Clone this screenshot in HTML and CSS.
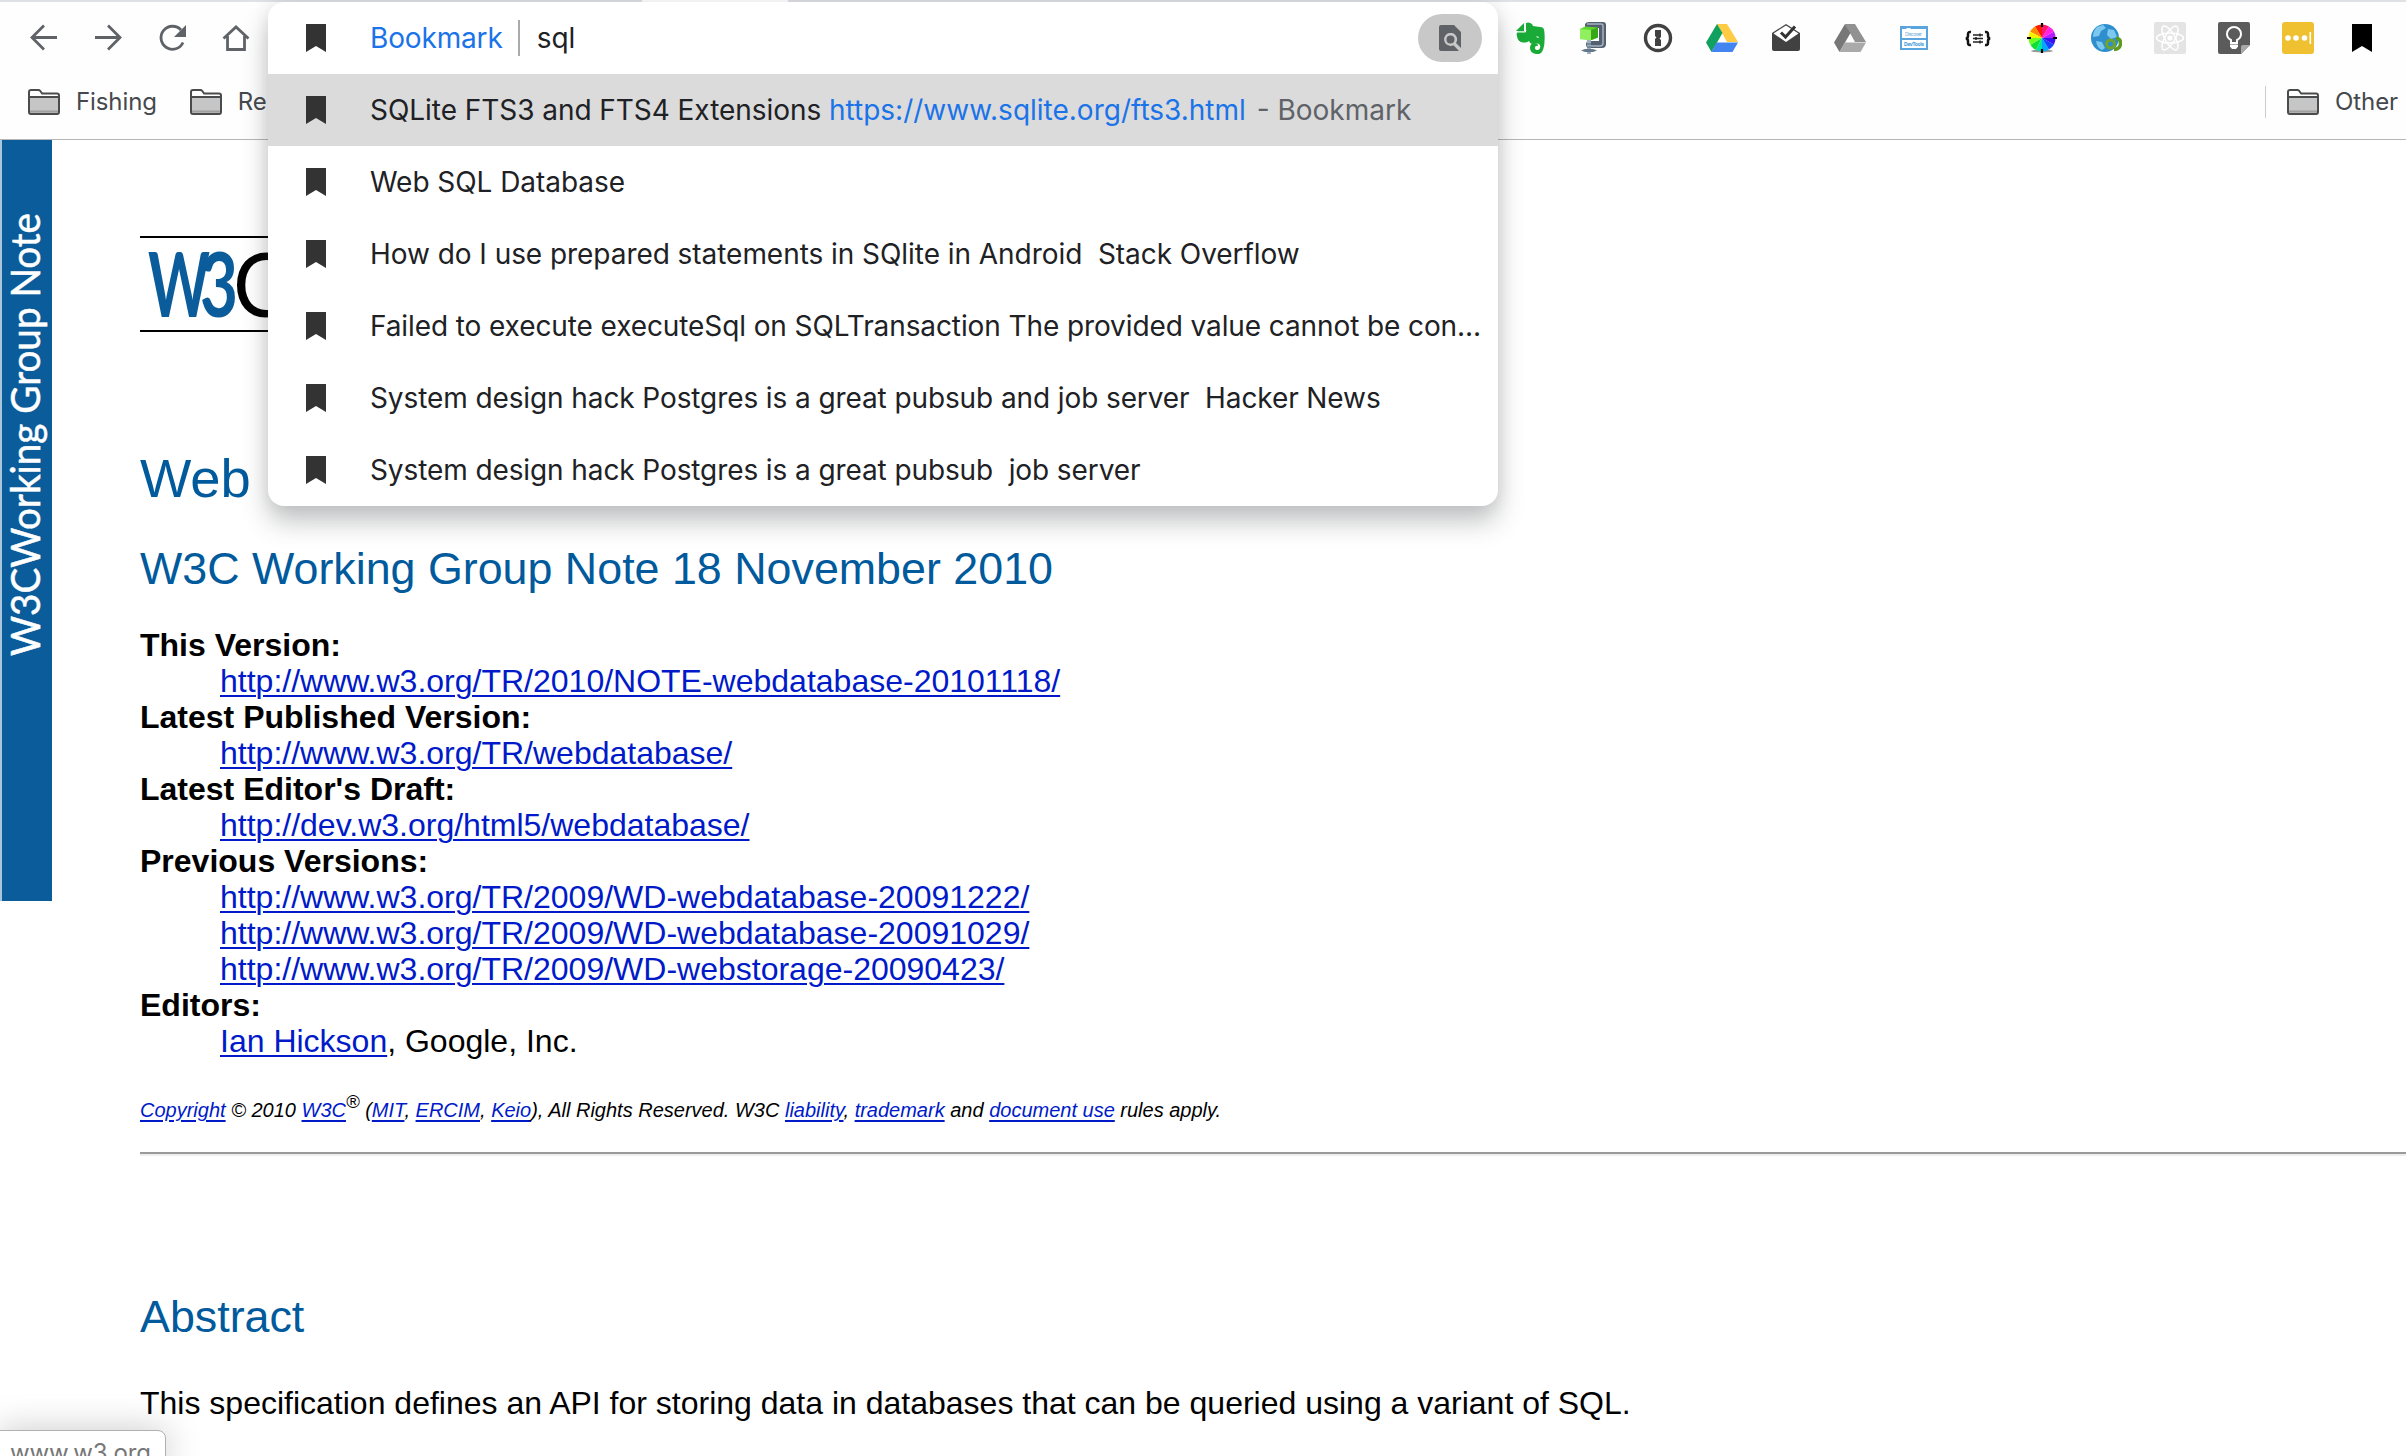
FILE: index.html
```html
<!DOCTYPE html>
<html lang="en">
<head>
<meta charset="utf-8">
<title>Web SQL Database</title>
<link rel="stylesheet" href="styles.css">
</head>
<body>
<svg class="defs" width="0" height="0">
  <defs>
    <symbol id="mark" viewBox="0 0 20 28"><path d="M0 0h20v28l-10-6-10 6z"/></symbol>
    <symbol id="folder" viewBox="0 0 32 26"><path d="M1 8V3q0-2 2-2h7.500q1 0 1.800 1l1.800 2.500H29q2 0 2 2V8" fill="#fff" stroke="#4a4b4d" stroke-width="2"/><path d="M1 8h30v15q0 2-2 2H3q-2 0-2-2z" fill="#c6c6c6" stroke="#4a4b4d" stroke-width="2"/><path d="M2 22.500h28" stroke="#9f9f9f" stroke-width="2"/></symbol>
  </defs>
</svg>
<div class="browser">
  <header class="chrome">
    <div class="tab-edge"><span class="tab-active"></span></div>
    <div class="toolbar">
      <nav class="nav">
        <svg viewBox="0 0 32 32"><path d="M29 15.500H4.500M16 3.500l-12 12 12 12"/></svg>
        <svg viewBox="0 0 32 32"><path d="M3 15.500h24.500M16 3.500l12 12-12 12"/></svg>
        <svg viewBox="0 0 32 32"><path d="M27 20.500A11.500 11.500 0 1 1 25 8"/><path class="solid" d="M30 3v12H18z"/></svg>
        <svg viewBox="0 0 32 32"><path d="M3.500 16.500L16 5l12.500 11.500M7.500 14v13.500h17V14"/></svg>
      </nav>
      <div class="extensions">
        <svg viewBox="0 0 32 32"><path fill="#1aaa38" d="M12 1Q15-.5 18 2l1 2 7 1q4 0 4.300 4 1.200 12-1.300 19-2 5-7 4-6-1-6-6 0-5 5-5 3 0 3 3-3-1-3 2 0 2 3 2 3-1 2-5-2-3-7-1-3 0-4-3-2 2-6 1.500-5-.5-6-6-1-4 1-5h7q2 0 1-2z"/><path d="M10 1v8H2z" fill="#1aaa38"/><path d="M11.500 1v9H2.500" fill="none" stroke="#fff" stroke-width="1"/><path d="M22 15q2-2 3 1z" fill="#fff"/></svg>
        <svg viewBox="2 0 32 32"><path d="M9 2q1-2 4-2h14q3 0 3 3v19q0 4-4 4H13q-3 0-3-4l1-3h12V6H9z" fill="#52606f"/><path d="M11 2h14q2 0 2 2v17q0 3-3 3H12" fill="none" stroke="#a7b4c2" stroke-width="1.500"/><path d="M4 7l5-2.500 13 1v10l-6 2.500-12-1z" fill="#5fd62b"/><path d="M4 7l11 1v10L4 17z" fill="#91f05e"/><path d="M15 8l7-2.500v10L15 18z" fill="#38a817"/><path d="M11 18h4v14h-4z" fill="#9fb0c0"/><path d="M5 28.500l4-1.500h8l4 1.500-4 1.500H9z" fill="#65798c"/><path d="M11 22h4m-4 3h4" stroke="#4c6074"/></svg>
        <svg viewBox="0 0 32 32"><circle cx="16" cy="16" r="12.500" fill="#fff" stroke="#414141" stroke-width="3.400"/><path d="M13 8h6v7l-1.500 1.500L19 18v6h-6v-7l1.500-1.500L13 14z" fill="#414141"/></svg>
        <svg viewBox="0 0 32 32"><path d="M11 2h10l11 18H21z" fill="#ffcb45"/><path d="M11 2l5.500 9L5.500 30 0 20.500z" fill="#0fa15d"/><path d="M10.500 20.500H32L26.500 30h-21z" fill="#4285f0"/></svg>
        <svg viewBox="0 0 32 32"><path d="M2 11L16 2l14 9v16q0 2-2 2H4q-2 0-2-2z" fill="#414141"/><path d="M3.500 11.500L16 3.500l12.500 8L16 20z" fill="#fff"/><path d="M11 10.500l4.500 4.500L25 4.500" fill="none" stroke="#333" stroke-width="3"/></svg>
        <svg viewBox="0 0 32 32"><path d="M11 2h10l11 18H21z" fill="#919191"/><path d="M11 2l5.500 9L5.500 30 0 20.500z" fill="#777"/><path d="M10.500 20.500H32L26.500 30h-21z" fill="#aaa"/></svg>
        <svg viewBox="0 0 32 32"><path d="M2 4h28v24H2z" fill="#5aa5de"/><path d="M4 7h4l1-1h3l1 1h15v9H4zM4 18h24v8H4z" fill="#fff"/><text x="7" y="14" font-size="5" textLength="17" fill="#69a9d8">Discover</text><text x="6" y="23.500" font-size="5" font-weight="700" textLength="20" fill="#4197d8">DevTools</text></svg>
        <svg viewBox="0 0 32 32"><path d="M9 10Q6 9.500 6 12v2q0 2-2 2.500 2 .5 2 2.500v2q0 2.500 3 2M23 10q3-.5 3 2v2q0 2 2 2.500-2 .5-2 2.500v2q0 2.500-3 2" fill="none" stroke="#111" stroke-width="2.500"/><path d="M11 13h10M11 16.500h10M11 20h10M18 11.500v3M14 15v3M18 18.500v3" stroke="#222" stroke-width="1.500"/></svg>
        <svg viewBox="0 0 32 32"><ellipse cx="16" cy="29" rx="11" ry="1.500" fill="#999"/><path fill="#ff1c00" d="M16 16V2.500a13.500 13.500 0 0 0-7 2z"/><path fill="#ff8a00" d="M16 16L9 4.500a13.500 13.500 0 0 0-5 5z"/><path fill="#f6f000" d="M16 16L4 9.500A13.500 13.500 0 0 0 2.500 16z"/><path fill="#6fff20" d="M16 16H2.500a13.500 13.500 0 0 0 2 7z"/><path fill="#10df30" d="M16 16L4.500 23A13.500 13.500 0 0 0 10 28z"/><path fill="#00e6a0" d="M16 16l-6 12a13.500 13.500 0 0 0 6 1.500z"/><path fill="#00a8ff" d="M16 16v13.500a13.500 13.500 0 0 0 7-2z"/><path fill="#1344ff" d="M16 16l7 11.500a13.500 13.500 0 0 0 5-5z"/><path fill="#3a10f0" d="M16 16l12 6.500a13.500 13.500 0 0 0 1.500-6.500z"/><path fill="#b51cff" d="M16 16h13.500A13.500 13.500 0 0 0 28 9.500z"/><path fill="#ff20e8" d="M16 16l12-6.500a13.500 13.500 0 0 0-5-5z"/><path fill="#ff1670" d="M16 16l7-11.500a13.500 13.500 0 0 0-7-2z"/><path d="M16 1v4m0 22v4M1 16h4m22 0h4" stroke="#000" stroke-width="2.200"/></svg>
        <svg viewBox="0 0 32 32"><circle cx="15" cy="16" r="14" fill="#2f8fce"/><path d="M7 5l6-2 3 3-5 3-2 5-6 1q0-6 4-10zM18 7l6 1 3 7-6 2-4-4zM6 19l6 1 3 6-3 2q-5-2-6-9z" fill="#7cc8ee"/><path d="M26 16.500q4.500 0 4.500 4.500 0 6-6.500 6.500" fill="none" stroke="#5e9a20" stroke-width="3.500"/><circle cx="20.500" cy="22" r="4" fill="none" stroke="#6fa52a" stroke-width="3"/></svg>
        <svg viewBox="0 0 32 32"><rect width="32" height="32" rx="2" fill="#e4e4e4"/><g fill="none" stroke="#fff" stroke-width="1.500"><ellipse cx="16" cy="16" rx="13.500" ry="5"/><ellipse cx="16" cy="16" rx="13.500" ry="5" transform="rotate(60 16 16)"/><ellipse cx="16" cy="16" rx="13.500" ry="5" transform="rotate(120 16 16)"/></g><circle cx="16" cy="16" r="2.600" fill="#fff"/></svg>
        <svg viewBox="0 0 32 32"><path d="M2 0h28q2 0 2 2v21l-9 9H2q-2 0-2-2V2q0-2 2-2z" fill="#5b5b5b"/><path d="M23 32v-7q0-2 2-2h7z" fill="#a9a9a9"/><path d="M13 21v-3q-4-2-4-6a7 7 0 0 1 14 0q0 4-4 6v3z" fill="none" stroke="#fff" stroke-width="2"/><path d="M12 22.500h8v2l-2 2.500h-4l-2-2.500z" fill="#fff"/></svg>
        <svg viewBox="0 0 32 32"><rect width="32" height="32" rx="3" fill="#efc02f"/><g fill="#fff"><circle cx="6" cy="16" r="2.800"/><circle cx="14" cy="16" r="2.800"/><circle cx="22.500" cy="16" r="2.800"/><path d="M27.500 10h1.600v12h-1.600z"/></g></svg>
        <svg viewBox="0 0 32 32"><path d="M6 2h20v28l-10-6-10 6z" fill="#000"/></svg>
      </div>
    </div>
    <div class="bookmarks">
      <div class="bookmark"><svg class="folder"><use href="#folder"/></svg><span>Fishing</span></div>
      <div class="bookmark"><svg class="folder"><use href="#folder"/></svg><span>Re</span></div>
      <div class="bookmark other"><svg class="folder"><use href="#folder"/></svg><span>Other</span></div>
    </div>
  </header>

  <main class="page">
    <aside class="ribbon">
      <svg width="52" height="761"><text transform="translate(40 516) rotate(-90)" textLength="443" lengthAdjust="spacingAndGlyphs">W3CWorking Group Note</text></svg>
    </aside>
    <article class="doc">
      <div class="logo">
        <svg width="200" height="92"><text class="w3" x="8" y="79" textLength="62" lengthAdjust="spacingAndGlyphs">W</text><text class="w3" x="60" y="79" textLength="38" lengthAdjust="spacingAndGlyphs">3</text><text class="c" x="93" y="79" textLength="56" lengthAdjust="spacingAndGlyphs">C</text></svg>
      </div>
      <h1>Web</h1>
      <h2 class="date"><span>W3C Working Group Note 18 November 2010</span></h2>
      <dl>
        <dt>This Version:</dt>
        <dd><a>http://www.w3.org/TR/2010/NOTE-webdatabase-20101118/</a></dd>
        <dt>Latest Published Version:</dt>
        <dd><a>http://www.w3.org/TR/webdatabase/</a></dd>
        <dt>Latest Editor's Draft:</dt>
        <dd><a>http://dev.w3.org/html5/webdatabase/</a></dd>
        <dt>Previous Versions:</dt>
        <dd><a>http://www.w3.org/TR/2009/WD-webdatabase-20091222/</a></dd>
        <dd><a>http://www.w3.org/TR/2009/WD-webdatabase-20091029/</a></dd>
        <dd><a>http://www.w3.org/TR/2009/WD-webstorage-20090423/</a></dd>
        <dt>Editors:</dt>
        <dd><a>Ian Hickson</a>, Google, Inc.</dd>
      </dl>
      <p class="copyright"><a>Copyright</a> © 2010 <a>W3C</a><sup>®</sup> (<a>MIT</a>, <a>ERCIM</a>, <a>Keio</a>), All Rights Reserved. W3C <a>liability</a>, <a>trademark</a> and <a>document use</a> rules apply.</p>
      <hr>
      <h2 class="abstract">Abstract</h2>
      <p class="summary">This specification defines an API for storing data in databases that can be queried using a variant of SQL.</p>
    </article>
  </main>

  <section class="omnibox">
    <div class="query">
      <svg class="mark"><use href="#mark"/></svg>
      <span class="keyword">Bookmark</span><span class="bar"></span><span class="typed">sql</span>
      <span class="pill"><svg viewBox="0 0 22 26"><path d="M2 0h13l7 7v16l-5-5a6.500 6.500 0 1 0-2.500 2.200L20 26H2q-2 0-2-2V2q0-2 2-2z" fill="#5f6368"/><circle cx="11.500" cy="14.500" r="4" fill="#5f6368"/></svg></span>
    </div>
    <div class="row selected"><svg class="mark"><use href="#mark"/></svg><span class="label">SQLite FTS3 and FTS4 Extensions <b>https://www.sqlite.org/fts3.html</b> <i>- Bookmark</i></span></div>
    <div class="row"><svg class="mark"><use href="#mark"/></svg><span class="label">Web SQL Database</span></div>
    <div class="row"><svg class="mark"><use href="#mark"/></svg><span class="label">How do I use prepared statements in SQlite in Android  Stack Overflow</span></div>
    <div class="row"><svg class="mark"><use href="#mark"/></svg><span class="label tight">Failed to execute executeSql on SQLTransaction The provided value cannot be con...</span></div>
    <div class="row"><svg class="mark"><use href="#mark"/></svg><span class="label tight">System design hack Postgres is a great pubsub and job server  Hacker News</span></div>
    <div class="row"><svg class="mark"><use href="#mark"/></svg><span class="label tight">System design hack Postgres is a great pubsub  job server</span></div>
  </section>

  <div class="status">www.w3.org</div>
</div>
</body>
</html>
```
FILE: styles.css
```css
* { box-sizing: border-box; }
body { margin: 0; background: #fff; overflow: hidden; }
svg { display: block; flex: none; }
.defs { position: absolute; }
.browser { position: relative; height: 1456px; overflow: hidden; font-family: Inter, "Liberation Sans", sans-serif; }

/* browser chrome */
.chrome { height: 140px; background: #fefefe; border-bottom: 1px solid #b6b6b6; position: relative; }
.tab-edge { position: absolute; inset: 0 0 auto; height: 2px; padding-left: 642px; background: #dee1e6; }
.tab-active { display: block; width: 146px; height: 2px; background: #fff; }
.toolbar { height: 76px; padding: 0 28px; display: flex; justify-content: space-between; align-items: center; }
.nav, .extensions { display: flex; gap: 32px; }
.nav svg, .extensions svg { width: 32px; height: 32px; }
.nav path { fill: none; stroke: #5f6368; stroke-width: 2.8; }
.nav .solid { fill: #5f6368; stroke: none; }
.bookmarks { height: 51px; padding: 0 8px 0 28px; display: flex; align-items: center; gap: 33px; font-size: 24px; letter-spacing: -.1px; color: #45494d; }
.bookmark { display: flex; align-items: center; gap: 16px; }
.bookmark.other { margin-left: auto; height: 32px; border-left: 1px solid #ccc; padding-left: 21px; }
.folder { width: 32px; height: 26px; }

/* document */
.page { display: flex; height: 1316px; font-family: "Liberation Sans", Arial, sans-serif; font-size: 32px; line-height: 36px; color: #000; }
.ribbon { width: 52px; height: 761px; flex: none; background: #0b5c9b; box-shadow: inset 2px 0 #a9c6dd; }
.ribbon text { font: 40px Lato, sans-serif; fill: #fff; stroke: #fff; stroke-width: .5; }
.doc { flex: 1; padding: 96px 0 0 88px; min-width: 0; }
.logo { width: 200px; height: 96px; border-top: 2px solid #000; border-bottom: 2px solid #000; }
.logo text { font-family: Lato, sans-serif; font-size: 90px; }
.logo .w3 { fill: #0b5c9b; font-weight: 700; }
.logo .c { fill: #000; font-weight: 400; }
h1, h2 { margin: 0; color: #005a9c; font-weight: 400; }
h1 { margin-top: 116px; font-size: 54.4px; line-height: 62px; }
h2 { font-size: 44.8px; line-height: 52px; }
.date { margin-top: 32px; }
dl { margin: 33px 0 0; }
dt { font-weight: 700; }
dd { margin: 0 0 0 80px; }
a { color: #001ac9; text-decoration: underline; text-decoration-thickness: 2px; text-underline-offset: 3px; }
.copyright { margin: 39px 0 0; font-size: 20px; line-height: 24px; font-style: italic; }
sup { font-size: 18.5px; line-height: 0; vertical-align: 9px; }
hr { margin: 30px 0 0; height: 4px; border: 0; border-top: 2px solid #9a9a9a; background: #eee; }
.abstract { margin-top: 134px; }
.summary { margin: 43px 0 0; }

/* suggestion popup */
.omnibox { position: absolute; left: 268px; top: 2px; width: 1230px; height: 504px; border-radius: 16px; background: #fff; overflow: visible; box-shadow: 0 16px 26px rgba(60, 64, 67, .3), 0 0 18px rgba(0, 0, 0, .08); font-size: 28px; color: #202124; }
.query, .row { height: 72px; display: flex; align-items: center; padding-left: 38px; }
.mark { width: 20px; height: 28px; margin-right: 44px; fill: #333; }
.query { padding-right: 16px; }
.keyword { color: #1a73e8; letter-spacing: -.15px; }
.bar { width: 2px; height: 36px; margin: 0 17px 0 15px; background: #aaa; }
.pill { margin-left: auto; width: 64px; height: 48px; border-radius: 24px; background: #c8c8c8; display: grid; place-items: center; }
.pill svg { width: 22px; height: 26px; }
.selected { background: #dbdbdb; }
.label { white-space: pre; letter-spacing: -.05px; }
.label.tight { letter-spacing: -.1px; }
.label b { font-weight: 400; color: #1a73e8; letter-spacing: 0; }
.label i { font-style: normal; color: #5f6368; margin-left: 3px; letter-spacing: 0; }

.status { position: absolute; left: -2px; top: 1430px; width: 168px; height: 40px; padding: 7px 0 0 11px; border: 1px solid #b0b0b0; border-radius: 0 8px 0 0; background: #fff; box-shadow: 0 0 36px rgba(0, 0, 0, .22); font-size: 24px; line-height: 30px; letter-spacing: -.2px; color: #777; }
```
